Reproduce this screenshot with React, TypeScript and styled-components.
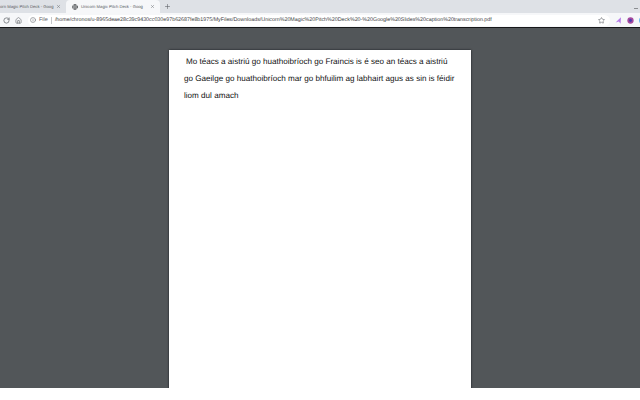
import { createGlobalStyle, styled } from "styled-components";
import { Globe, Info, Plus, RotateCw, Home, Star, X } from "lucide-react";

const GlobalStyle = createGlobalStyle`
  html, body {
    margin: 0;
    padding: 0;
    background: #fff;
  }
  body {
    font-family: "Liberation Sans", Arial, sans-serif;
    text-rendering: geometricPrecision;
  }
`;

const Page = styled.div`
  width: 640px;
  height: 400px;
  overflow: hidden;
  display: flex;
  flex-direction: column;
  background: #fff;
`;

const TabStrip = styled.div`
  height: 13px;
  background: #dee1e6;
  display: flex;
  align-items: stretch;
  position: relative;
`;

const Tab = styled.div<{ $active?: boolean; $w: number; $pad: number }>`
  width: ${(p) => p.$w}px;
  background: ${(p) => (p.$active ? "#f6f7f9" : "transparent")};
  border-radius: 4px 4px 0 0;
  display: flex;
  align-items: center;
  gap: 3px;
  padding: 0 5px 0 ${(p) => p.$pad}px;
  box-sizing: border-box;

  svg {
    flex-shrink: 0;
  }
`;

const TabTitle = styled.span`
  flex: 1;
  min-width: 0;
  font-size: 4.2px;
  line-height: 13px;
  color: #5a5d62;
  white-space: nowrap;
`;

const NewTab = styled.div`
  width: 15px;
  display: flex;
  align-items: center;
  justify-content: center;
  color: #5f6368;
`;

const Minimize = styled.div`
  position: absolute;
  right: 2px;
  top: 8px;
  width: 4px;
  height: 1px;
  background: #8a8d91;
`;

const Toolbar = styled.div`
  height: 14px;
  background: #f6f7f9;
  display: flex;
  align-items: center;
  overflow: hidden;
  padding-left: 3px;
  gap: 5px;
  color: #5f6368;

  svg {
    flex-shrink: 0;
  }
`;

const Omnibox = styled.div`
  width: 582px;
  height: 11px;
  flex-shrink: 0;
  margin-left: 1px;
  background: #fff;
  border-radius: 6px;
  display: flex;
  align-items: center;
  padding: 0 5px 0 2px;
  box-sizing: border-box;
  gap: 3px;
`;

const FileLabel = styled.span`
  font-size: 5.5px;
  color: #5f6368;
`;

const Divider = styled.span`
  width: 1px;
  height: 7px;
  background: #c4c6c9;
`;

const Url = styled.span`
  flex: 1;
  min-width: 0;
  font-size: 5.34px;
  color: #3c4043;
  white-space: nowrap;
`;

const ToolbarEdge = styled.div`
  height: 1px;
  background: #17181a;
`;

const Viewer = styled.div`
  flex: 1;
  min-height: 0;
  background: #525659;
  display: flex;
  justify-content: center;
  padding-top: 22px;
`;

const Sheet = styled.div`
  width: 302px;
  height: 340px;
  background: #fff;
  box-shadow: 0 0 2px #14181c;
  padding: 3px 15px 0;
  box-sizing: border-box;
`;

const Line = styled.p<{ $indent?: number }>`
  margin: 0;
  font-size: 8.1px;
  line-height: 17.2px;
  color: #111;
  white-space: nowrap;
  padding-left: ${(p) => p.$indent ?? 0}px;
`;

const BottomStrip = styled.div`
  height: 12px;
  background: #fff;
  flex-shrink: 0;
`;

const ExtIcon = styled.svg`
  width: 7px;
  height: 7px;
`;

export default function App() {
  return (
    <Page>
      <GlobalStyle />
      <TabStrip>
        <Tab $w={66} $pad={0}>
          <TabTitle>orn Magic Pitch Deck - Goog</TabTitle>
          <X size={5} strokeWidth={2} color="#5f6368" />
        </Tab>
        <Tab $active $w={94} $pad={6}>
          <Globe size={6} color="#3c4043" strokeWidth={2.4} />
          <TabTitle>Unicorn Magic Pitch Deck - Goog</TabTitle>
          <X size={5} strokeWidth={2} color="#5f6368" />
        </Tab>
        <NewTab>
          <Plus size={7} strokeWidth={2} />
        </NewTab>
        <Minimize />
      </TabStrip>
      <Toolbar>
        <RotateCw size={7} strokeWidth={2.4} />
        <Home size={7} strokeWidth={2} />
        <Omnibox>
          <Info size={6} strokeWidth={2} />
          <FileLabel>File</FileLabel>
          <Divider />
          <Url>/home/chronos/u-8965deae28c39c9430cc030e97b62687fe8b1975/MyFiles/Downloads/Unicorn%20Magic%20Pitch%20Deck%20-%20Google%20Slides%20caption%20transcription.pdf</Url>
          <Star size={7} strokeWidth={2} />
        </Omnibox>
        <ExtIcon viewBox="0 0 10 10">
          <path d="M8.5 0.5 L8 9.5 L5.5 6.5 L1 8 L4 4.5 Z" fill="#b57be8" />
        </ExtIcon>
        <ExtIcon viewBox="0 0 10 10">
          <circle cx="5" cy="5" r="4.5" fill="#a54a9e" />
          <circle cx="5" cy="5" r="2" fill="#4b3bb0" />
        </ExtIcon>
        <ExtIcon viewBox="0 0 10 10">
          <circle cx="5" cy="5" r="5" fill="#6ab7f0" />
        </ExtIcon>
      </Toolbar>
      <ToolbarEdge />
      <Viewer>
        <Sheet>
          <Line $indent={2}>Mo téacs a aistriú go huathoibríoch go Fraincis is é seo an téacs a aistriú</Line>
          <Line>go Gaeilge go huathoibríoch mar go bhfuilim ag labhairt agus as sin is féidir</Line>
          <Line>liom dul amach</Line>
        </Sheet>
      </Viewer>
      <BottomStrip />
    </Page>
  );
}
